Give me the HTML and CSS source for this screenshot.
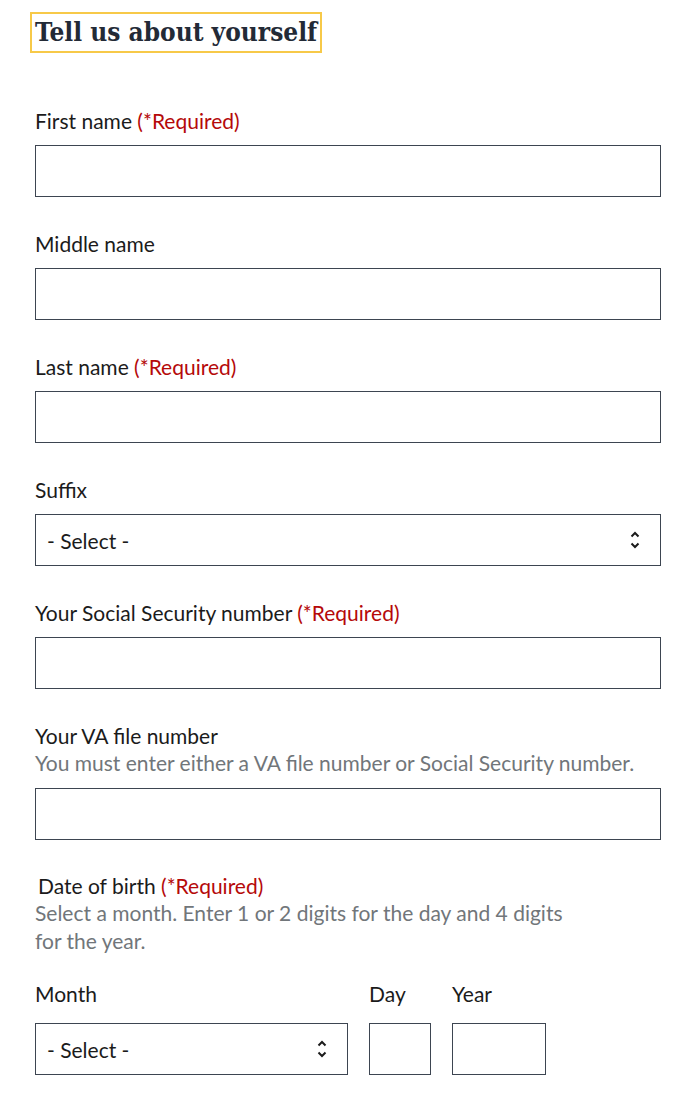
FILE: index.html
```html
<!DOCTYPE html>
<html lang="en">
<head>
<meta charset="utf-8">
<title>Tell us about yourself</title>
<link rel="stylesheet" href="styles.css">
</head>
<body>
<main class="page">
  <h1 class="title">Tell us about yourself</h1>

  <div class="field">
    <label class="label" for="first">First name <span class="req">(*Required)</span></label>
    <input class="input" id="first" type="text">
  </div>

  <div class="field">
    <label class="label" for="middle">Middle name</label>
    <input class="input" id="middle" type="text">
  </div>

  <div class="field">
    <label class="label" for="last">Last name <span class="req">(*Required)</span></label>
    <input class="input" id="last" type="text">
  </div>

  <div class="field">
    <label class="label" for="suffix">Suffix</label>
    <div class="select">
      <span class="select-text">- Select -</span>
      <svg class="chev" width="10" height="18" viewBox="0 0 10 18"><path d="M1.5 5.5 L5 2 L8.5 5.5 M1.5 12.5 L5 16 L8.5 12.5" fill="none" stroke="#1b1b1b" stroke-width="2"/></svg>
    </div>
  </div>

  <div class="field">
    <label class="label" for="ssn">Your Social Security number <span class="req">(*Required)</span></label>
    <input class="input" id="ssn" type="text">
  </div>

  <div class="field">
    <label class="label" for="va">Your VA file number</label>
    <div class="hint">You must enter either a VA file number or Social Security number.</div>
    <input class="input input-hinted" id="va" type="text">
  </div>

  <fieldset class="dob">
    <legend class="legend">Date of birth <span class="req">(*Required)</span></legend>
    <div class="hint hint-dob">Select a month. Enter 1 or 2 digits for the day and 4 digits for the year.</div>
    <div class="date-row">
      <div class="date-col">
        <label class="label">Month</label>
        <div class="select select-month">
          <span class="select-text">- Select -</span>
          <svg class="chev" width="10" height="18" viewBox="0 0 10 18"><path d="M1.5 5.5 L5 2 L8.5 5.5 M1.5 12.5 L5 16 L8.5 12.5" fill="none" stroke="#1b1b1b" stroke-width="2"/></svg>
        </div>
      </div>
      <div class="date-col">
        <label class="label">Day</label>
        <input class="input input-day" type="text">
      </div>
      <div class="date-col">
        <label class="label">Year</label>
        <input class="input input-year" type="text">
      </div>
    </div>
  </fieldset>
</main>
</body>
</html>
```

FILE: styles.css
```css
html, body {
  margin: 0;
  padding: 0;
  background: #ffffff;
}

.page {
  padding: 14px 39px 0 35px;
  font-family: Lato, "Source Sans Pro", "Noto Sans", sans-serif;
  color: #1b1b1b;
}

.title {
  display: inline-block;
  margin: 0 0 0 -3px;
  padding: 0 3px;
  font-family: "DejaVu Serif", serif;
  font-stretch: condensed;
  font-weight: 700;
  font-size: 26px;
  line-height: 37px;
  color: #232a36;
  outline: 2px solid #f7c948;
}

.title + .field {
  margin-top: 54px;
}

.field + .field {
  margin-top: 31px;
}

.label {
  display: block;
  padding-top: 3px;
  font-size: 21px;
  line-height: 26px;
  color: #1b1b1b;
}

.req {
  color: #b50909;
}

.hint {
  font-size: 21px;
  line-height: 28px;
  color: #71767a;
}

.input {
  display: block;
  box-sizing: border-box;
  width: 100%;
  height: 52px;
  margin: 11px 0 0;
  padding: 0 10px;
  border: 1px solid #3d4551;
  border-radius: 0;
  background: #fff;
  font: inherit;
}

.input-hinted {
  margin-top: 11px;
}

.select {
  box-sizing: border-box;
  display: flex;
  align-items: center;
  justify-content: space-between;
  height: 52px;
  margin-top: 11px;
  padding: 0 20px 0 11px;
  border: 1px solid #3d4551;
  font-size: 21px;
}

.chev {
  display: block;
}

.dob {
  margin: 33px 0 0;
  padding: 0;
  border: 0;
  min-width: 0;
}

.legend {
  padding: 0 0 0 3px;
  font-size: 21px;
  line-height: 26px;
}

.hint-dob {
  max-width: 545px;
}

.date-row {
  display: flex;
  gap: 21px;
  margin-top: 23px;
}

.date-col .input,
.date-col .select {
  margin-top: 16px;
}

.select-month {
  width: 313px;
}

.input-day {
  width: 62px;
}

.input-year {
  width: 94px;
}
```
